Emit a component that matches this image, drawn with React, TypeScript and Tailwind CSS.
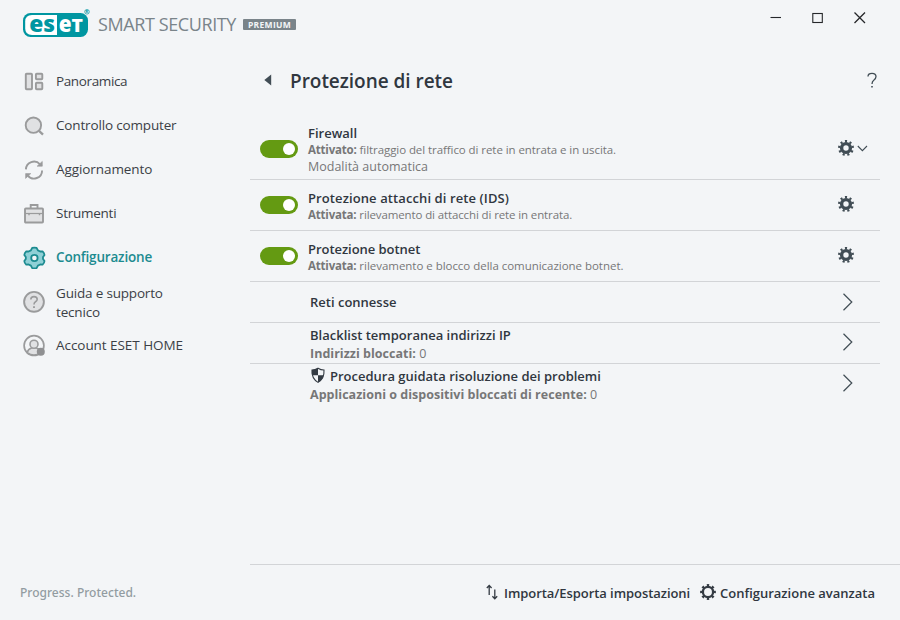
import type { ReactNode } from 'react';

function Logo() {
  return (
    <svg width="70" height="31" viewBox="0 0 70 31" className="shrink-0">
      <rect x="1" y="5" width="65" height="24" rx="7.5" fill="#0096a1" />
      <path d="M35 7H10Q3.2 7 3.2 13.5V20.5Q3.2 27 10 27H35Z" fill="#fff" />
      <g fontFamily="'Open Sans', sans-serif" fontWeight="800" fontSize="22">
        <text x="7.3" y="23.9" fill="#0096a1" textLength="25.8" lengthAdjust="spacingAndGlyphs">es</text>
        <text x="36.8" y="23.9" fill="#fff" textLength="12.8" lengthAdjust="spacingAndGlyphs">e</text>
        <text x="49.6" y="23.7" fill="#fff" fontSize="17.4" textLength="11.4" lengthAdjust="spacingAndGlyphs">T</text>
      </g>
      <circle cx="65" cy="3.8" r="2.3" fill="none" stroke="#0096a1" strokeWidth="0.7" />
      <text x="63.6" y="5.4" fontFamily="'Open Sans', sans-serif" fontWeight="700" fontSize="4" fill="#0096a1">R</text>
    </svg>
  );
}

function NavSvg({ children }: { children: ReactNode }) {
  return (
    <svg width="24" height="24" viewBox="0 0 24 24" fill="#e0e1e3" stroke="#9a9b9c" strokeWidth="1.9" className="shrink-0">
      {children}
    </svg>
  );
}

const OverviewIcon = () => (
  <NavSvg>
    <rect x="3.8" y="4.8" width="6.2" height="15.4" rx="0.8" />
    <rect x="13.9" y="4.8" width="6.4" height="5.4" rx="0.8" />
    <rect x="13.9" y="13.8" width="6.4" height="6.4" rx="0.8" />
  </NavSvg>
);

const ScanIcon = () => (
  <NavSvg>
    <circle cx="11.4" cy="12.2" r="7.7" />
    <path d="M17 17.8L21 21.6" strokeWidth="2.3" />
  </NavSvg>
);

const UpdateIcon = () => (
  <NavSvg>
    <path d="M3.9 12.4A8.1 8.1 0 0 1 18 7.3M20.1 13.4A8.1 8.1 0 0 1 5.8 18.6" fill="none" />
    <path d="M20.3 4.4V9.2H15.1ZM3.6 21.4V16.6H8.8Z" fill="#9a9b9c" stroke="#9a9b9c" strokeWidth="0.6" />
  </NavSvg>
);

const ToolsIcon = () => (
  <NavSvg>
    <path d="M8.7 7.2V4H15.5V7.2" fill="none" />
    <rect x="3" y="7.5" width="18" height="14" rx="0.8" />
    <path d="M3 12.5H21.5" strokeWidth="1.2" />
    <path d="M7 11.9V14.2M17.5 11.9V14.2" strokeWidth="1.4" />
  </NavSvg>
);

const SetupIcon = () => (
  <svg width="24" height="24" viewBox="0 0 24 24" fill="#8fd0d6" stroke="#1c8b90" strokeWidth="1.8" strokeLinejoin="round" className="shrink-0">
    <path d="M10.2 2.9Q12.4 2.2 14.6 2.9L15.9 5.4L18.2 6.5L20.6 6.3Q22.3 7.8 22.5 10L21 12V14L22.5 16Q22.3 18.2 20.6 19.7L18.2 19.5L15.9 20.6L14.6 23.1Q12.4 23.6 10.2 23.1L8.9 20.6L6.6 19.5L4.2 19.7Q2.5 18.2 2.3 16L3.8 14V12L2.3 10Q2.5 7.8 4.2 6.3L6.6 6.5L8.9 5.4Z" />
    <circle cx="12.4" cy="13" r="3.2" fill="#f3f5f7" />
  </svg>
);

const HelpIcon = () => (
  <NavSvg>
    <circle cx="12" cy="12.8" r="9.9" />
    <path d="M8.8 10.5Q8.9 7.6 12 7.6Q15.2 7.6 15.2 10.3Q15.2 11.8 13.5 12.8Q12 13.7 12 15.4" fill="none" strokeWidth="1.6" />
    <path d="M12 17.3V19" strokeWidth="1.9" />
  </NavSvg>
);

const AccountIcon = () => (
  <NavSvg>
    <circle cx="12" cy="12.6" r="9.9" fill="none" strokeWidth="1.7" />
    <path d="M5.2 19.6Q6 16 9.6 15.1H14.4Q18 16 18.8 19.6Q12 24.4 5.2 19.6Z" strokeWidth="1.5" />
    <circle cx="12" cy="11.2" r="4" strokeWidth="1.6" />
    <circle cx="18.8" cy="18.8" r="4" fill="#8f9092" stroke="none" />
  </NavSvg>
);

const nav = [
  { label: 'Panoramica', icon: OverviewIcon, text: 'tracking-[-0.38px]' },
  { label: 'Controllo computer', icon: ScanIcon, text: 'tracking-[-0.16px]' },
  { label: 'Aggiornamento', icon: UpdateIcon, text: 'tracking-[-0.08px]' },
  { label: 'Strumenti', icon: ToolsIcon, text: 'tracking-[-0.25px]' },
  { label: 'Configurazione', icon: SetupIcon, text: 'tracking-[-0.18px] font-semibold text-[#1c8b90]' },
  { label: 'Guida e supporto tecnico', icon: HelpIcon, text: 'tracking-[-0.18px] w-[112px] pt-[4px]' },
  { label: 'Account ESET HOME', icon: AccountIcon, text: 'tracking-[-0.05px]' },
];

function Gear() {
  return (
    <svg width="16" height="16" viewBox="0 0 16 16" fill="none" stroke="#414d55" className="mb-[2px] shrink-0">
      <circle cx="8" cy="8" r="4.4" strokeWidth="3.4" />
      <circle cx="8" cy="8" r="6.8" strokeWidth="2.4" pathLength="18" strokeDasharray="0.9 1.1" strokeDashoffset="0.45" transform="rotate(-90 8 8)" />
    </svg>
  );
}

function Toggle() {
  return (
    <div className="flex h-[18px] w-[38px] shrink-0 items-center justify-end rounded-full bg-[#649a12] pr-[3px]">
      <div className="size-[12px] rounded-full bg-white" />
    </div>
  );
}

function Shield() {
  return (
    <svg width="16" height="17" viewBox="0 0 16 17" className="mr-1 shrink-0">
      <path d="M8 1.2Q10.8 3 14 3Q14.6 11.4 8 15.4Q1.4 11.4 2 3Q5.2 3 8 1.2Z" fill="#f3f5f7" stroke="#343b43" strokeWidth="1.1" />
      <path d="M8 1.2V8.3H2.2Q1.6 6 2 3Q5.2 3 8 1.2ZM8 8.3H13.8Q12.6 12.8 8 15.4Z" fill="#343b43" />
    </svg>
  );
}

function ModuleRow({ title, state, desc, extra, height, titleText, descText }: {
  title: string; state: string; desc: string; extra?: string; height: string; titleText: string; descText: string;
}) {
  return (
    <div className={`flex items-center border-b border-[#d2d4d7] pl-[10px] ${height}`}>
      <Toggle />
      <div className="ml-[10px] flex-1 pt-[2px] whitespace-nowrap text-[#777777]">
        <div className={`text-[13px] leading-[17px] font-semibold text-[#30373f] ${titleText}`}>{title}</div>
        <div className="text-[11.5px] leading-[16px]">
          <b className="tracking-[-0.2px]">{state}</b>{' '}
          <span className={descText}>{desc}</span>
        </div>
        {extra && <div className="text-[12.5px] leading-[17px]">{extra}</div>}
      </div>
      <div className="flex w-[42px] items-center gap-[3px]">
        <Gear />
        {extra && (
          <svg width="11" height="7" viewBox="0 0 11 7" fill="none" stroke="#414d55" strokeWidth="1.1">
            <path d="M0.8 1L5.4 5.6L10 1" />
          </svg>
        )}
      </div>
    </div>
  );
}

function LinkRow({ title, label, count, shield, className }: {
  title: string; label?: string; count?: number; shield?: boolean; className: string;
}) {
  return (
    <div className={`flex items-center justify-between pl-[60px] whitespace-nowrap ${className}`}>
      <div className={label ? 'pt-[2px]' : ''}>
        <div className="flex items-center text-[13px] leading-[18px] font-semibold">
          {shield && <Shield />}
          {title}
        </div>
        {label && (
          <div className="pt-px text-[12.5px] leading-[18px] text-[#777777]">
            <b className="tracking-[0.02px]">{label}</b> {count}
          </div>
        )}
      </div>
      <svg width="12" height="18" viewBox="0 0 12 18" fill="none" stroke="#414d55" strokeWidth="1.2" className={`mr-[26px] shrink-0 ${label ? 'mb-[3px]' : ''}`}>
        <path d="M1.5 0.8L9.8 9L1.5 17.2" />
      </svg>
    </div>
  );
}

export default function App() {
  return (
    <div className="flex h-[620px] w-[900px] flex-col overflow-hidden bg-[#f3f5f7] font-['Open_Sans','Noto_Sans',sans-serif] text-[#30373f]">
      <header className="flex h-[59px] shrink-0 items-start justify-between pt-2 pr-[33px] pl-[22px]">
        <div className="flex">
          <Logo />
          <span className="mt-[4px] ml-[6px] w-[145px] text-[18px] leading-[25px] tracking-[-0.4px] whitespace-nowrap text-[#7a848a]">SMART SECURITY</span>
          <span className="mt-[11px] flex h-[11px] w-[53px] items-center justify-center rounded-[1px] bg-[#7a848a] pt-px text-[8.5px] leading-none font-bold tracking-[0.3px] text-[#f3f5f7]">PREMIUM</span>
        </div>
        <svg width="98" height="20" viewBox="0 0 98 20" fill="none" stroke="#25272a" strokeWidth="1.1">
          <path d="M1.5 9.5H12" />
          <rect x="43.8" y="5.5" width="9.5" height="9" />
          <path d="M85.5 4.5L96 15M96 4.5L85.5 15" strokeWidth="1.3" />
        </svg>
      </header>
      <div className="flex flex-1">
        <aside className="flex w-[250px] shrink-0 flex-col justify-between pb-[17px] pl-[22px]">
          <nav>
            {nav.map(({ label, icon: Icon, text }) => (
              <div key={label} className="flex h-[44px] items-center gap-[10px] text-[13.5px] leading-[19px] text-[#3b3f46]">
                <Icon />
                <span className={text}>{label}</span>
              </div>
            ))}
          </nav>
          <div className="-ml-[2px] font-['Noto_Sans',sans-serif] text-[12px] leading-[20px] font-medium tracking-[0.02px] text-[#929ca1]">Progress. Protected.</div>
        </aside>
        <div className="flex flex-1 flex-col">
          <main className="flex-1 pr-5">
            <div className="flex h-[59px] items-start pt-[7px]">
              <svg width="8" height="12" viewBox="0 0 8 12" className="mt-[8px] ml-[14px]">
                <path d="M7.2 0.6V11.4L0.3 6Z" fill="#414d55" />
              </svg>
              <h1 className="ml-[18px] flex-1 text-[19px] leading-[30px] font-semibold tracking-[-0.03px]">Protezione di rete</h1>
              <svg width="12" height="18" viewBox="0 0 12 18" fill="none" stroke="#414d55" strokeWidth="1.3" className="mt-[6px] mr-[2px]">
                <path d="M2 4.6Q2 1.3 6 1.3Q10 1.3 10 4.6Q10 6.6 8 8Q6 9.4 6 12" />
                <path d="M6 14V15.6" strokeWidth="1.6" />
              </svg>
            </div>
            <ModuleRow title="Firewall" state="Attivato:" desc="filtraggio del traffico di rete in entrata e in uscita." extra="Modalità automatica" height="h-[62px]" titleText="" descText="tracking-[-0.07px]" />
            <ModuleRow title="Protezione attacchi di rete (IDS)" state="Attivata:" desc="rilevamento di attacchi di rete in entrata." height="h-[51px]" titleText="tracking-[0.1px]" descText="tracking-[-0.12px]" />
            <ModuleRow title="Protezione botnet" state="Attivata:" desc="rilevamento e blocco della comunicazione botnet." height="h-[51px]" titleText="tracking-[-0.05px]" descText="tracking-[-0.03px]" />
            <LinkRow className="h-[41px] border-b border-[#d2d4d7]" title="Reti connesse" />
            <LinkRow className="h-[41px] border-b border-[#d2d4d7] pt-px" title="Blacklist temporanea indirizzi IP" label="Indirizzi bloccati:" count={0} />
            <LinkRow className="h-[40px]" title="Procedura guidata risoluzione dei problemi" label="Applicazioni o dispositivi bloccati di recente:" count={0} shield />
          </main>
          <footer className="flex h-[56px] items-center justify-end border-t border-[#d2d4d7] pr-[25px] text-[13px] font-semibold">
            <svg width="12" height="16" viewBox="0 0 12 16" fill="none" stroke="#343b43" strokeWidth="1.3" className="mr-[6px] mb-[2px]">
              <path d="M3.2 11V1.6M0.8 4L3.2 1.5L5.6 4M8.8 5.5V14.6M6.4 12.2L8.8 14.7L11.2 12.2" />
            </svg>
            <span className="w-[196px] pt-[2px] tracking-[-0.06px]">Importa/Esporta impostazioni</span>
            <svg width="16" height="16" viewBox="0 0 16 16" fill="none" stroke="#343b43" className="mr-1 mb-[2px]">
              <circle cx="8" cy="8" r="5.1" strokeWidth="2.3" />
              <circle cx="8" cy="8" r="6.9" strokeWidth="2" pathLength="16" strokeDasharray="0.9 1.1" strokeDashoffset="0.45" />
            </svg>
            <span className="pt-[2px]">Configurazione avanzata</span>
          </footer>
        </div>
      </div>
    </div>
  );
}
